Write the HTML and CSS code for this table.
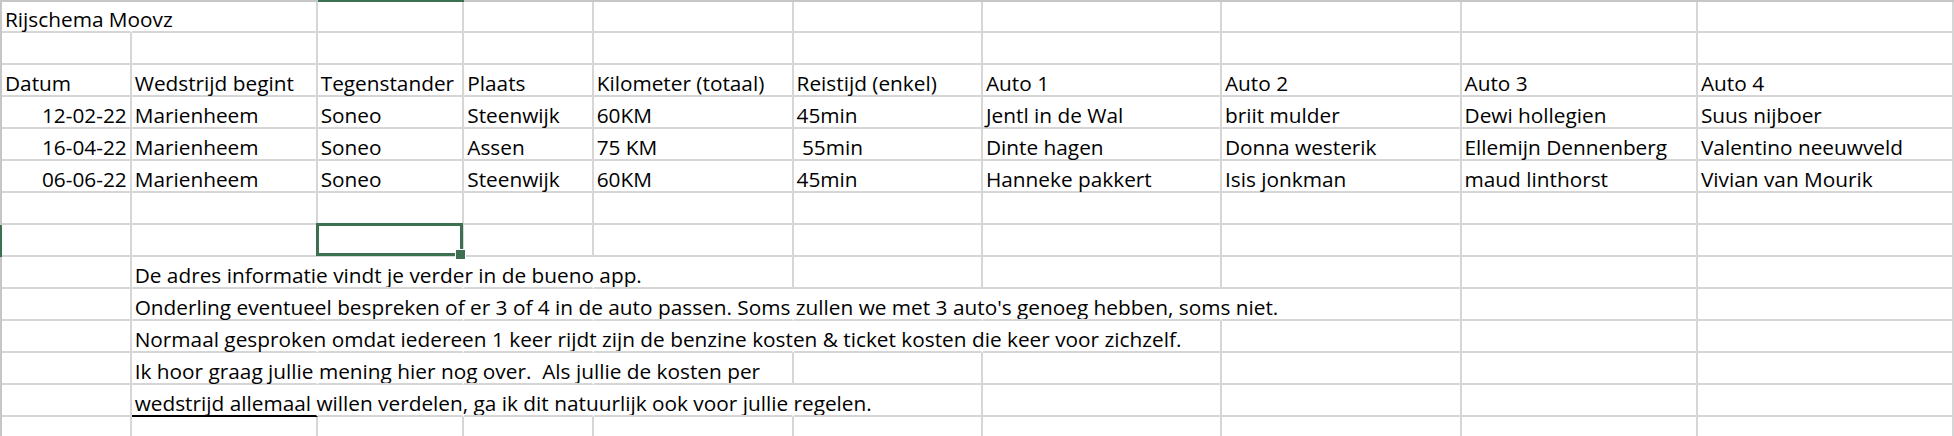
FILE: index.html
```html
<!DOCTYPE html>
<html>
<head>
<meta charset="utf-8">
<link rel="stylesheet" href="styles.css">
</head>
<body>
<div class="sheet">
  <div class="row top">
    <div class="e"></div><div></div><div></div><div class="g"></div><div></div><div></div><div></div><div></div><div></div><div></div><div></div>
  </div>
  <div class="row first">
    <div class="e"></div>
    <div class="c o">Rijschema Moovz</div><div class="c"></div><div class="c"></div><div class="c"></div><div class="c"></div><div class="c"></div><div class="c"></div><div class="c"></div><div class="c"></div><div class="c"></div>
  </div>
  <div class="row">
    <div class="e"></div>
    <div class="c"></div><div class="c"></div><div class="c"></div><div class="c"></div><div class="c"></div><div class="c"></div><div class="c"></div><div class="c"></div><div class="c"></div><div class="c"></div>
  </div>
  <div class="row">
    <div class="e"></div>
    <div class="c">Datum</div><div class="c">Wedstrijd begint</div><div class="c">Tegenstander</div><div class="c">Plaats</div><div class="c">Kilometer (totaal)</div><div class="c">Reistijd (enkel)</div><div class="c">Auto 1</div><div class="c">Auto 2</div><div class="c">Auto 3</div><div class="c">Auto 4</div>
  </div>
  <div class="row">
    <div class="e"></div>
    <div class="c r">12-02-22</div><div class="c">Marienheem</div><div class="c">Soneo</div><div class="c">Steenwijk</div><div class="c">60KM</div><div class="c">45min</div><div class="c">Jentl in de Wal</div><div class="c">briit mulder</div><div class="c">Dewi hollegien</div><div class="c">Suus nijboer</div>
  </div>
  <div class="row">
    <div class="e"></div>
    <div class="c r">16-04-22</div><div class="c">Marienheem</div><div class="c">Soneo</div><div class="c">Assen</div><div class="c">75 KM</div><div class="c">&nbsp;55min</div><div class="c">Dinte hagen</div><div class="c">Donna westerik</div><div class="c">Ellemijn Dennenberg</div><div class="c">Valentino neeuwveld</div>
  </div>
  <div class="row">
    <div class="e"></div>
    <div class="c r">06-06-22</div><div class="c">Marienheem</div><div class="c">Soneo</div><div class="c">Steenwijk</div><div class="c">60KM</div><div class="c">45min</div><div class="c">Hanneke pakkert</div><div class="c">Isis jonkman</div><div class="c">maud linthorst</div><div class="c">Vivian van Mourik</div>
  </div>
  <div class="row">
    <div class="e"></div>
    <div class="c"></div><div class="c"></div><div class="c"></div><div class="c"></div><div class="c"></div><div class="c"></div><div class="c"></div><div class="c"></div><div class="c"></div><div class="c"></div>
  </div>
  <div class="row">
    <div class="e g"></div>
    <div class="c"></div><div class="c"></div><div class="c sel"></div><div class="c"></div><div class="c"></div><div class="c"></div><div class="c"></div><div class="c"></div><div class="c"></div><div class="c"></div>
  </div>
  <div class="row">
    <div class="e"></div>
    <div class="c"></div><div class="c o">De adres informatie vindt je verder in de bueno app.</div><div class="c o"></div><div class="c o"></div><div class="c"></div><div class="c"></div><div class="c"></div><div class="c"></div><div class="c"></div><div class="c"></div>
  </div>
  <div class="row">
    <div class="e"></div>
    <div class="c"></div><div class="c o">Onderling eventueel bespreken of er 3 of 4 in de auto passen. Soms zullen we met 3 auto's genoeg hebben, soms niet.</div><div class="c o"></div><div class="c o"></div><div class="c o"></div><div class="c o"></div><div class="c o"></div><div class="c"></div><div class="c"></div><div class="c"></div>
  </div>
  <div class="row">
    <div class="e"></div>
    <div class="c"></div><div class="c o">Normaal gesproken omdat iedereen 1 keer rijdt zijn de benzine kosten &amp; ticket kosten die keer voor zichzelf.</div><div class="c o"></div><div class="c o"></div><div class="c o"></div><div class="c o"></div><div class="c"></div><div class="c"></div><div class="c"></div><div class="c"></div>
  </div>
  <div class="row">
    <div class="e"></div>
    <div class="c"></div><div class="c o">Ik hoor graag jullie mening hier nog over.&nbsp; Als jullie de kosten per</div><div class="c o"></div><div class="c o"></div><div class="c"></div><div class="c"></div><div class="c"></div><div class="c"></div><div class="c"></div><div class="c"></div>
  </div>
  <div class="row">
    <div class="e"></div>
    <div class="c"></div><div class="c o ul">wedstrijd allemaal willen verdelen, ga ik dit natuurlijk ook voor jullie regelen.</div><div class="c o"></div><div class="c o"></div><div class="c o"></div><div class="c"></div><div class="c"></div><div class="c"></div><div class="c"></div><div class="c"></div>
  </div>
  <div class="row">
    <div class="e"></div>
    <div class="c"></div><div class="c"></div><div class="c"></div><div class="c"></div><div class="c"></div><div class="c"></div><div class="c"></div><div class="c"></div><div class="c"></div><div class="c"></div>
  </div>
</div>
</body>
</html>
```
FILE: styles.css
```css
html, body {
  margin: 0;
  padding: 0;
  background: #fff;
  overflow: hidden;
}
body {
  width: 1954px;
  height: 436px;
}
.sheet {
  display: flex;
  flex-direction: column;
  font-family: "Open Sans", Lato, sans-serif;
  font-size: 20.8px;
  color: #000;
}
.row {
  display: grid;
  grid-template-columns: 2px 129.7px 186px 146.6px 129.4px 199.9px 189.4px 239px 239.6px 236.4px 1fr;
  height: 32.03px;
  flex: none;
}
.row.first {
  height: 31.3px;
}
.row.top {
  height: 2px;
  background: #c6c6c6;
}
.row.top .g {
  background: #3c7050;
}
.e {
  background: #c6c6c6;
}
.e.g {
  background: #3c7050;
}
.c {
  box-sizing: border-box;
  border-right: 2px solid #d6d6d6;
  border-bottom: 2px solid #d6d6d6;
  padding: 0 3px 0 3px;
  white-space: nowrap;
  display: flex;
  align-items: flex-end;
  line-height: 24px;
  min-width: 0;
}
.c.o {
  border-right-color: transparent;
}
.c.r {
  justify-content: flex-end;
}
.c.ul {
  border-bottom-color: #000;
}
.c.sel {
  position: relative;
}
.c.sel::after {
  content: "";
  position: absolute;
  top: -2px;
  left: -2px;
  right: -1px;
  bottom: -1px;
  border: 3px solid #3c7050;
}
.c.sel::before {
  content: "";
  position: absolute;
  right: -4px;
  bottom: -5px;
  width: 9px;
  height: 9px;
  background: #3c7050;
  border: 1px solid #fff;
  z-index: 1;
}
```
